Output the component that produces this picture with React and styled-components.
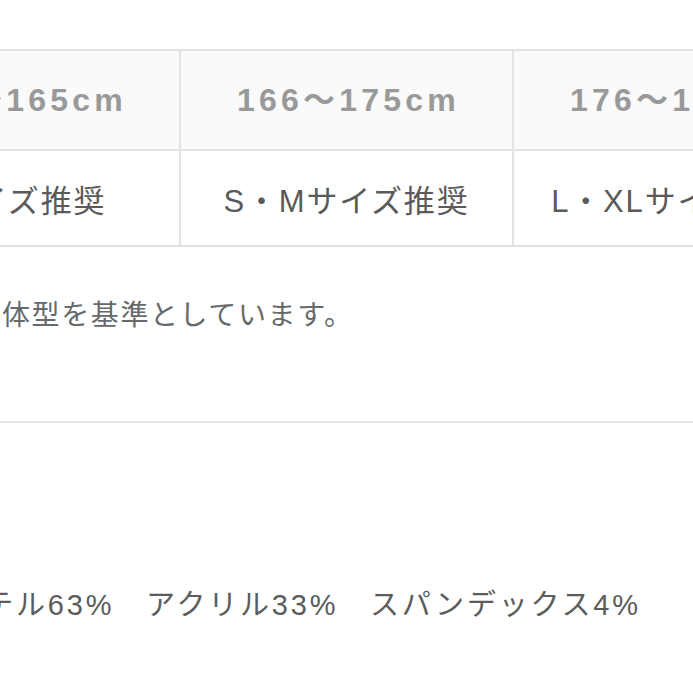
import React from 'react';
import styled, { createGlobalStyle } from 'styled-components';

const GlobalStyle = createGlobalStyle`
    html, body {
        margin: 0;
        padding: 0;
        background: #ffffff;
    }
    body {
        font-family: "Liberation Sans", "Noto Sans CJK JP", sans-serif;
        overflow: hidden;
    }
`

const Page = styled.div`
    width: 693px;
    height: 693px;
    overflow: hidden;
    padding-top: 49px;
    box-sizing: border-box;
`

const SizeTable = styled.div`
    display: grid;
    grid-template-columns: repeat(3, 333px);
    width: max-content;
    margin-left: -154px;
    border-top: 2px solid #e3e3e3;
    border-left: 2px solid #e3e3e3;
`

const Cell = styled.div`
    display: flex;
    align-items: center;
    justify-content: center;
    box-sizing: border-box;
    border-right: 2px solid #e3e3e3;
    border-bottom: 2px solid #e3e3e3;
    white-space: nowrap;
`

const HeadCell = styled(Cell)`
    height: 100px;
    padding: 0 0 6px 4px;
    background: #fafafa;
    color: #999999;
    font-size: 32px;
    font-weight: 700;
    letter-spacing: 4.2px;
`

const BodyCell = styled(Cell)`
    height: 96px;
    background: #ffffff;
    color: #5a5a5a;
    font-size: 31px;
    letter-spacing: 1.8px;
`

const Note = styled.p`
    margin: 49px 0 0 2px;
    font-size: 28px;
    line-height: 40px;
    color: #666a6c;
    letter-spacing: 1.6px;
    white-space: nowrap;
`

const Rule = styled.hr`
    margin: 85px 0 0 0;
    border: none;
    border-top: 2px solid #e6e6e6;
    height: 0;
`

const Material = styled.p`
    margin: 162px 0 0 -143px;
    font-size: 29px;
    line-height: 40px;
    color: #5c5c5c;
    letter-spacing: 2.8px;
    white-space: nowrap;
`

const sizes = [
    { range: '155〜165cm', fit: 'Sサイズ推奨' },
    { range: '166〜175cm', fit: 'S・Mサイズ推奨' },
    { range: '176〜185cm', fit: 'L・XLサイズ推奨' },
];

export default function App() {
    return (
        <>
            <GlobalStyle />
            <Page>
                <SizeTable>
                    {sizes.map(s => <HeadCell key={s.range}>{s.range}</HeadCell>)}
                    {sizes.map(s => <BodyCell key={s.fit}>{s.fit}</BodyCell>)}
                </SizeTable>
                <Note>体型を基準としています。</Note>
                <Rule />
                <Material>ポリエステル63%　アクリル33%　スパンデックス4%</Material>
            </Page>
        </>
    );
}
